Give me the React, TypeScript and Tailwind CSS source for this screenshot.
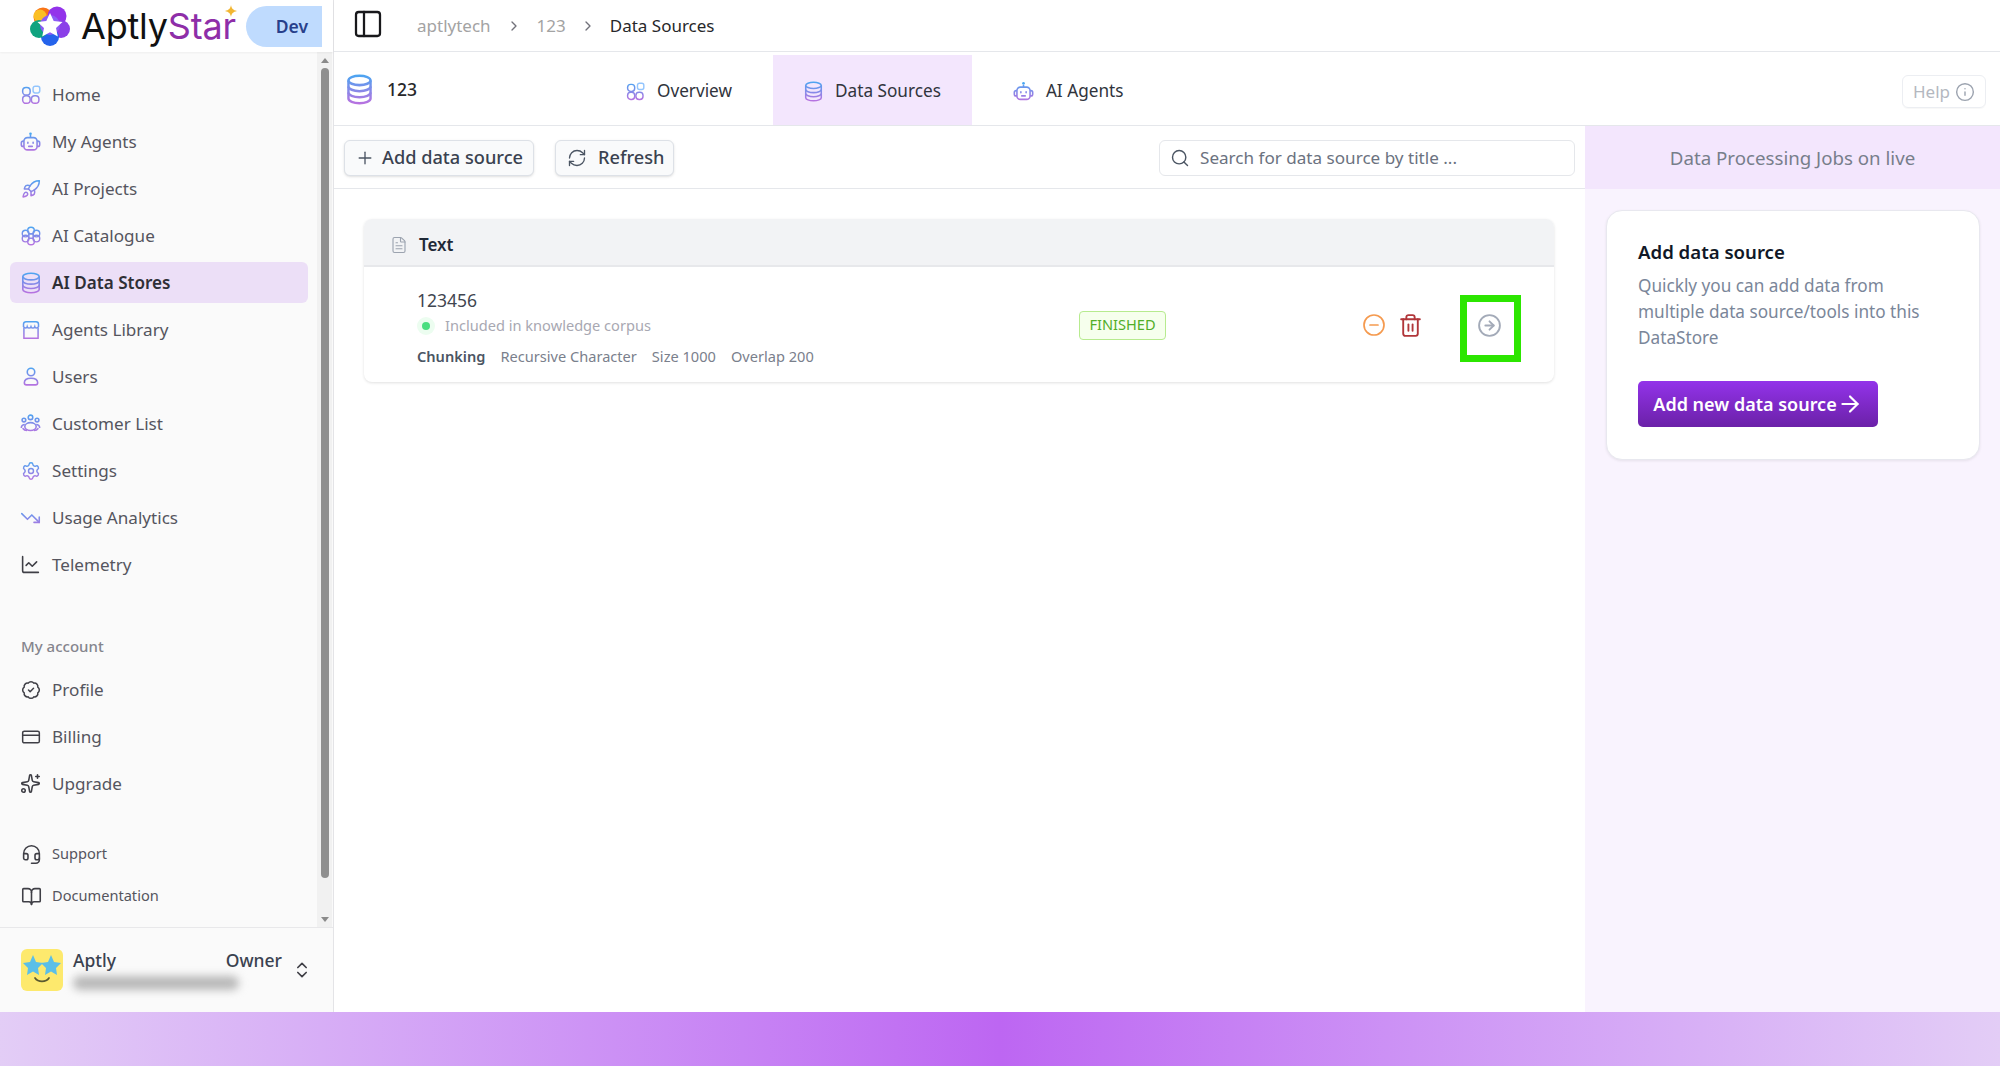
import React from 'react';
import {
  PanelLeft, ChevronRight, ChevronsUpDown, Plus, RefreshCw, Search, Info, MinusCircle,
  Trash2, ArrowRight, CircleArrowRight, Rocket, Settings, TrendingDown, ChartLine,
  BadgeCheck, CreditCard, Sparkles, BookOpen, Headset, FileText,
} from 'lucide-react';

const G = 'url(#iconGrad)';

const HomeIcon = ({ size = 20 }: { size?: number }) => (
  <svg width={size} height={size} viewBox="0 0 24 24" fill="none" stroke={G} strokeWidth="1.8">
    <rect x="2" y="3" width="9" height="9" rx="4" />
    <rect x="14.5" y="1.5" width="8" height="8" rx="2.5" stroke="#93c5fd" />
    <rect x="2" y="13" width="9" height="9" rx="4" />
    <rect x="12.5" y="13" width="9" height="9" rx="4" />
  </svg>
);

const BotIcon = ({ size = 22 }: { size?: number }) => (
  <svg width={size} height={size} viewBox="0 0 24 24" fill="none" stroke={G} strokeWidth="1.8">
    <circle cx="12" cy="2.6" r="1.5" fill="#47a7f2" stroke="none" />
    <path d="M12 4v3" />
    <rect x="4.5" y="7" width="15" height="14" rx="4" />
    <path d="M4.5 11H3.5a2 2 0 0 0-2 2v2a2 2 0 0 0 2 2h1M19.5 11h1a2 2 0 0 1 2 2v2a2 2 0 0 1-2 2h-1" />
    <path d="M9 12.2v1.2M15 12.2v1.2M10 17h4" strokeLinecap="round" />
  </svg>
);

const DbIcon = ({ size = 21, width, sw = 1.8 }: { size?: number; width?: number; sw?: number }) => (
  <svg width={width ?? size} height={size} viewBox="0 0 22 24" fill="none" stroke={G} strokeWidth={sw} preserveAspectRatio="none">
    <ellipse cx="11" cy="5" rx="9" ry="3.6" />
    <path d="M2 5v14c0 2 4 3.6 9 3.6s9-1.6 9-3.6V5" />
    <path d="M2 9.7c0 2 4 3.6 9 3.6s9-1.6 9-3.6M2 14.4c0 2 4 3.6 9 3.6s9-1.6 9-3.6" />
  </svg>
);

const FlowerIcon = () => (
  <svg width="20" height="20" viewBox="0 0 24 24" fill="none" stroke={G} strokeWidth="1.7">
    <circle cx="12" cy="5.5" r="4" />
    <circle cx="12" cy="18.5" r="4" />
    <circle cx="5.5" cy="9" r="4" />
    <circle cx="18.5" cy="9" r="4" />
    <circle cx="5.5" cy="15" r="4" />
    <circle cx="18.5" cy="15" r="4" />
    <rect x="9.5" y="9.5" width="5" height="5" rx="1" fill="#fafafa" />
  </svg>
);

const LibraryIcon = () => (
  <svg width="20" height="20" viewBox="0 0 24 24" fill="none" stroke={G} strokeWidth="1.8">
    <path d="M3 8V5a3 3 0 0 1 3-3h12a3 3 0 0 1 3 3v3c-1.5 2.2-4 2.2-4.5 0-.8 2.2-3.7 2.2-4.5 0-.8 2.2-3.7 2.2-4.5 0C7 10.2 4.5 10.2 3 8Z" />
    <path d="M3.5 9v13h17V9" />
  </svg>
);

const UserIcon = () => (
  <svg width="20" height="21" viewBox="0 0 24 24" fill="none" stroke={G} strokeWidth="1.9">
    <circle cx="12" cy="6.5" r="4.5" />
    <path d="M4 19.5c0-3.5 3.5-5.5 8-5.5s8 2 8 5.5c0 1.5-1 2.5-2.5 2.5h-11C5 22 4 21 4 19.5Z" />
  </svg>
);

const CrowdIcon = () => (
  <svg width="21" height="21" viewBox="0 0 24 24" fill="none" stroke={G} strokeWidth="1.8">
    <circle cx="12" cy="5" r="2.6" />
    <circle cx="4.5" cy="8" r="2.1" />
    <circle cx="19.5" cy="8" r="2.1" />
    <path d="M1.5 17c0-2.4 2-3.8 4-3.8M22.5 17c0-2.4-2-3.8-4-3.8" />
    <ellipse cx="12" cy="15.5" rx="6.5" ry="4.5" />
    <path d="M3 17.5c1.5 2 4 2.5 5 2.5M21 17.5c-1.5 2-4 2.5-5 2.5" />
  </svg>
);

const Logo = () => (
  <svg width="40" height="40" viewBox="0 0 40 40">
    <circle cx="13" cy="11" r="9.5" fill="#f97316" />
    <circle cx="10" cy="10" r="6.5" fill="#fbbf24" />
    <circle cx="27" cy="10" r="9.5" fill="#9333ea" />
    <circle cx="31" cy="23" r="9" fill="#8b3fe8" />
    <circle cx="20" cy="31" r="9" fill="#2563eb" />
    <circle cx="9" cy="23" r="9" fill="#10a37f" />
    <circle cx="20" cy="19" r="10" fill="#8b5cf6" />
    <polygon points="20,7 23.7,15 32.5,16 26,22 27.8,30.5 20,26.2 12.2,30.5 14,22 7.5,16 16.3,15" fill="#fff" />
  </svg>
);

const Sparkle = () => (
  <svg width="16" height="16" viewBox="0 0 16 16" className="absolute right-[-3px] top-[-5px]">
    <path d="M8 2c.6 3.5 2 5 6 6-4 1-5.4 2.5-6 6-.6-3.5-2-5-6-6 4-1 5.4-2.5 6-6Z" fill="#f2b632" />
  </svg>
);

const Avatar = () => (
  <div className="w-[42px] h-[42px] rounded-md bg-[#fde96d] flex items-center justify-center shrink-0">
    <svg width="40" height="36" viewBox="0 0 40 36">
      <polygon points="11,3 14,10 21,11 16,16 17,23 11,19.5 5,23 6,16 1,11 8,10" fill="#5bbfe8" />
      <polygon points="29,3 32,10 39,11 34,16 35,23 29,19.5 23,23 24,16 19,11 26,10" fill="#5bbfe8" />
      <path d="M13 26c3 4.5 11 4.5 14 0" fill="none" stroke="#5b5a30" strokeWidth="1.7" strokeLinecap="round" />
    </svg>
  </div>
);

const NavItem = ({ icon, label, active }: { icon: React.ReactNode; label: string; active?: boolean }) => (
  <div className={`h-[41px] ml-[10px] mr-[9px] pl-[10px] flex items-center gap-[11px] rounded-md text-[17.1px] ${active ? 'bg-[#ecdff7] font-semibold text-[#2f2f36]' : 'text-[#55555e]'}`}>
    <span className="w-[21px] flex justify-center shrink-0">{icon}</span>
    {label}
  </div>
);

const TabItem = ({ icon, label, active }: { icon: React.ReactNode; label: string; active?: boolean }) => (
  <div className={`px-[31px] mt-[3px] pt-[2px] flex items-center gap-[12px] text-[17.2px] text-[#30343c] ${active ? 'bg-[#f3e6fd]' : ''}`}>
    {icon}
    {label}
  </div>
);

export default function App() {
  return (
    <div className="h-screen w-full flex flex-col overflow-hidden bg-white font-['Noto_Sans','Open_Sans',sans-serif]">
      <svg width="0" height="0" className="absolute">
        <defs>
          <linearGradient id="iconGrad" gradientUnits="userSpaceOnUse" x1="0" y1="0" x2="0" y2="24">
            <stop offset="0" stopColor="#47a7f2" />
            <stop offset="1" stopColor="#bd6fdf" />
          </linearGradient>
        </defs>
      </svg>

      <div className="flex-1 flex min-h-0">
        <aside className="w-[334px] shrink-0 flex flex-col bg-[#fafafa] border-r border-[#e4e4e7]">
          <div className="h-[52px] shrink-0 bg-white flex items-center pl-[30px] pr-[11px] shadow-[0_1px_2px_rgba(0,0,0,0.05)] z-10">
            <Logo />
            <div className="relative ml-[11px] text-[36px] leading-none tracking-[-0.2px] font-['Inter',sans-serif] text-[#111]">
              Aptly<span className="text-[#8e2ea8]">Star</span>
              <Sparkle />
            </div>
            <div className="ml-auto w-[76px] h-[41px] rounded-l-full bg-[#bfdbfe] flex items-center justify-end pr-[14px] text-[17.5px] font-semibold text-[#27408b]">
              Dev
            </div>
          </div>

          <div className="flex-1 flex min-h-0">
            <nav className="flex-1 pt-[22px] min-w-0">
              <div className="flex flex-col gap-[6px]">
                <NavItem icon={<HomeIcon />} label="Home" />
                <NavItem icon={<BotIcon />} label="My Agents" />
                <NavItem icon={<Rocket size={20} stroke={G} strokeWidth={1.8} />} label="AI Projects" />
                <NavItem icon={<FlowerIcon />} label="AI Catalogue" />
                <NavItem icon={<DbIcon size={22} width={20} />} label="AI Data Stores" active />
                <NavItem icon={<LibraryIcon />} label="Agents Library" />
                <NavItem icon={<UserIcon />} label="Users" />
                <NavItem icon={<CrowdIcon />} label="Customer List" />
                <NavItem icon={<Settings size={20} stroke={G} strokeWidth={1.7} />} label="Settings" />
                <NavItem icon={<TrendingDown size={22} stroke={G} strokeWidth={1.8} />} label="Usage Analytics" />
                <NavItem icon={<ChartLine size={21} stroke="#3f3f46" strokeWidth={1.8} />} label="Telemetry" />
              </div>
              <div className="mt-[51px] ml-[21px] h-[20px] flex items-center text-[15px] font-medium text-[#85858d]">My account</div>
              <div className="flex flex-col gap-[6px] mt-[13px]">
                <NavItem icon={<BadgeCheck size={20} stroke="#3f3f46" strokeWidth={1.8} />} label="Profile" />
                <NavItem icon={<CreditCard size={20} stroke="#3f3f46" strokeWidth={1.8} />} label="Billing" />
                <NavItem icon={<Sparkles size={21} stroke="#3f3f46" strokeWidth={1.8} />} label="Upgrade" />
              </div>
              <div className="mt-[32px] flex flex-col gap-[6px] text-[#55555e]">
                <div className="h-[36px] ml-[21px] flex items-center gap-[10px] text-[14.6px]">
                  <Headset size={21} stroke="#3f3f46" strokeWidth={1.8} />
                  Support
                </div>
                <div className="h-[36px] ml-[21px] flex items-center gap-[10px] text-[14.6px]">
                  <BookOpen size={21} stroke="#3f3f46" strokeWidth={1.8} />
                  Documentation
                </div>
              </div>
            </nav>
            <div className="w-[15px] mr-[1px] shrink-0 bg-[#f1f1f1] flex flex-col items-center">
              <svg width="10" height="16" viewBox="0 0 10 16" className="shrink-0"><polygon points="5,6 9,11 1,11" fill="#8a8a8a" /></svg>
              <div className="w-[8px] h-[810px] rounded-full bg-[#8f8f8f]" />
              <div className="flex-1" />
              <svg width="10" height="16" viewBox="0 0 10 16" className="shrink-0"><polygon points="5,11 9,6 1,6" fill="#8a8a8a" /></svg>
            </div>
          </div>

          <div className="h-[85px] shrink-0 border-t border-[#e8e8ea] pl-[21px] pt-[21px] flex gap-[10px]">
            <Avatar />
            <div className="w-[209px] shrink-0">
              <div className="flex justify-between items-center text-[17.5px] font-medium text-[#3a4250] h-[22px]">
                <span>Aptly</span>
                <span>Owner</span>
              </div>
              <div className="mt-[5px] w-[166px] h-[14px] rounded-full bg-[#b8b8b8] blur-[4px]" />
            </div>
            <ChevronsUpDown size={20} strokeWidth={2} className="text-[#3f3f46] mt-[11px]" />
          </div>
        </aside>

        <main className="flex-1 min-w-0 flex flex-col">
          <div className="h-[52px] shrink-0 border-b border-[#e5e7eb] flex items-center pl-[18px] text-[17px]">
            <PanelLeft size={32} strokeWidth={1.7} className="text-[#18181b] mb-[3px]" />
            <span className="ml-[33px] text-[#a3a3a3]">aptlytech</span>
            <ChevronRight size={16} className="mx-[15px] text-[#71717a]" />
            <span className="text-[#a3a3a3]">123</span>
            <ChevronRight size={16} className="mx-[14px] text-[#71717a]" />
            <span className="text-[#27272a]">Data Sources</span>
          </div>

          <div className="h-[74px] shrink-0 border-b border-[#e5e7eb] flex items-stretch">
            <div className="w-[253px] shrink-0 pl-[12px] pt-[2px] flex items-center gap-[14px] text-[17.5px] font-medium text-[#27272a]">
              <DbIcon size={31} width={27} sw={2} />
              123
            </div>
            <div className="flex gap-[10px] ml-[8px]">
              <TabItem icon={<HomeIcon size={19} />} label="Overview" />
              <TabItem icon={<DbIcon size={21} width={19} />} label="Data Sources" active />
              <TabItem icon={<BotIcon size={21} />} label="AI Agents" />
            </div>
            <div className="ml-auto mr-[14px] mt-[23px] h-[33px] w-[84px] rounded-md border border-[#eceef2] shadow-[0_1px_1px_rgba(0,0,0,0.03)] flex items-center justify-center gap-[5px] text-[17px] text-[#b4b8c0]">
              Help
              <Info size={20} strokeWidth={1.7} className="text-[#9ca3af]" />
            </div>
          </div>

          <div className="flex-1 min-h-0 flex">
            <div className="flex-1 min-w-0 flex flex-col">
              <div className="h-[63px] shrink-0 border-b border-[#e5e7eb] pl-[10px] pr-[10px] pt-[2px] flex items-center gap-[21px]">
                <button className="w-[190px] h-[36px] pl-[10px] flex items-center gap-[7px] rounded-md border border-[#dde1e7] bg-[#f9fafb] shadow-sm text-[18.2px] font-medium text-[#3a4250]">
                  <Plus size={20} strokeWidth={1.6} className="text-[#4b5563]" />
                  Add data source
                </button>
                <button className="w-[119px] h-[36px] pl-[11px] flex items-center gap-[11px] rounded-md border border-[#dde1e7] bg-[#f9fafb] shadow-sm text-[18.2px] font-medium text-[#3a4250]">
                  <RefreshCw size={20} strokeWidth={1.6} className="text-[#4b5563]" />
                  Refresh
                </button>
                <div className="ml-auto w-[416px] h-[36px] rounded-md border border-[#e5e7eb] flex items-center pl-[10px] gap-[10px] text-[17.1px] text-[#6b7280]">
                  <Search size={20} strokeWidth={1.7} className="text-[#4b5563]" />
                  Search for data source by title ...
                </div>
              </div>

              <div className="mt-[30px] ml-[30px] mr-[31px] rounded-lg bg-white shadow-[0_1px_3px_rgba(0,0,0,0.12)]">
                <div className="h-[48px] bg-[#f2f3f5] border-b-2 border-[#e7e8eb] rounded-t-lg pl-[26px] pt-[5px] flex items-center gap-[11px] text-[17px] font-semibold text-[#1f2937]">
                  <FileText size={18} strokeWidth={1.5} className="text-[#9ca3af]" />
                  Text
                </div>
                <div className="h-[115px] pl-[53px] pt-[1px] flex items-center">
                  <div className="w-[662px] shrink-0 pt-[5px]">
                    <div className="text-[17.5px] leading-[24px] text-[#3f4650]">123456</div>
                    <div className="flex items-center mt-[3px] h-[22px] text-[14.6px] text-[#a8a8b2]">
                      <span className="w-[18px] h-[18px] rounded-full bg-[#ecfdf0] flex items-center justify-center mr-[10px]">
                        <span className="w-[8px] h-[8px] rounded-full bg-[#4ade80]" />
                      </span>
                      Included in knowledge corpus
                    </div>
                    <div className="flex items-center gap-[15px] mt-[9px] text-[14.6px] text-[#7a808c]">
                      <span className="font-semibold text-[#4b5563]">Chunking</span>
                      <span>Recursive Character</span>
                      <span>Size 1000</span>
                      <span>Overlap 200</span>
                    </div>
                  </div>
                  <div className="w-[87px] h-[29px] rounded-[4px] bg-[#f6ffed] border border-[#b7eb8f] flex items-center justify-center text-[14.6px] text-[#52ae28] shrink-0">
                    FINISHED
                  </div>
                  <MinusCircle size={24} strokeWidth={1.7} className="ml-[196px] text-[#f59a4f] shrink-0" />
                  <Trash2 size={25} strokeWidth={1.8} className="ml-[12px] text-[#b1363a] shrink-0" />
                  <div className="ml-[37px] mt-[6px] w-[61px] h-[67px] border-[7px] border-[#2ce600] flex items-center justify-center pr-[2px] pb-[6px] shrink-0">
                    <CircleArrowRight size={25} strokeWidth={1.8} className="text-[#a3aab8]" />
                  </div>
                </div>
              </div>
            </div>

            <div className="w-[415px] shrink-0 bg-[#f9f3fe] flex flex-col">
              <div className="h-[63px] shrink-0 bg-[#f3e6fd] pt-[2px] flex items-center justify-center text-[18.7px] text-[#777e8b]">
                Data Processing Jobs on live
              </div>
              <div className="mt-[21px] ml-[21px] mr-[20px] rounded-2xl bg-white border border-[#e8e8ef] shadow-[0_1px_3px_rgba(0,0,0,0.08)] pt-[28px] pb-[32px] px-[31px]">
                <div className="text-[18.6px] leading-[26px] font-semibold text-[#111827]">Add data source</div>
                <p className="mt-[8px] text-[17.2px] leading-[26px] text-[#7a8699]">
                  Quickly you can add data from multiple data source/tools into this DataStore
                </p>
                <button className="mt-[30px] w-[240px] h-[46px] rounded-[5px] bg-linear-to-b from-[#9333ea] to-[#6b21a8] flex items-center justify-center text-[18px] font-semibold text-white">
                  Add new data source
                  <ArrowRight size={26} strokeWidth={2} />
                </button>
              </div>
            </div>
          </div>
        </main>
      </div>

      <div className="h-[54px] shrink-0 bg-linear-to-r from-[#e3cdf6] via-[#bd66f2] to-[#e3cdf6]" />
    </div>
  );
}
